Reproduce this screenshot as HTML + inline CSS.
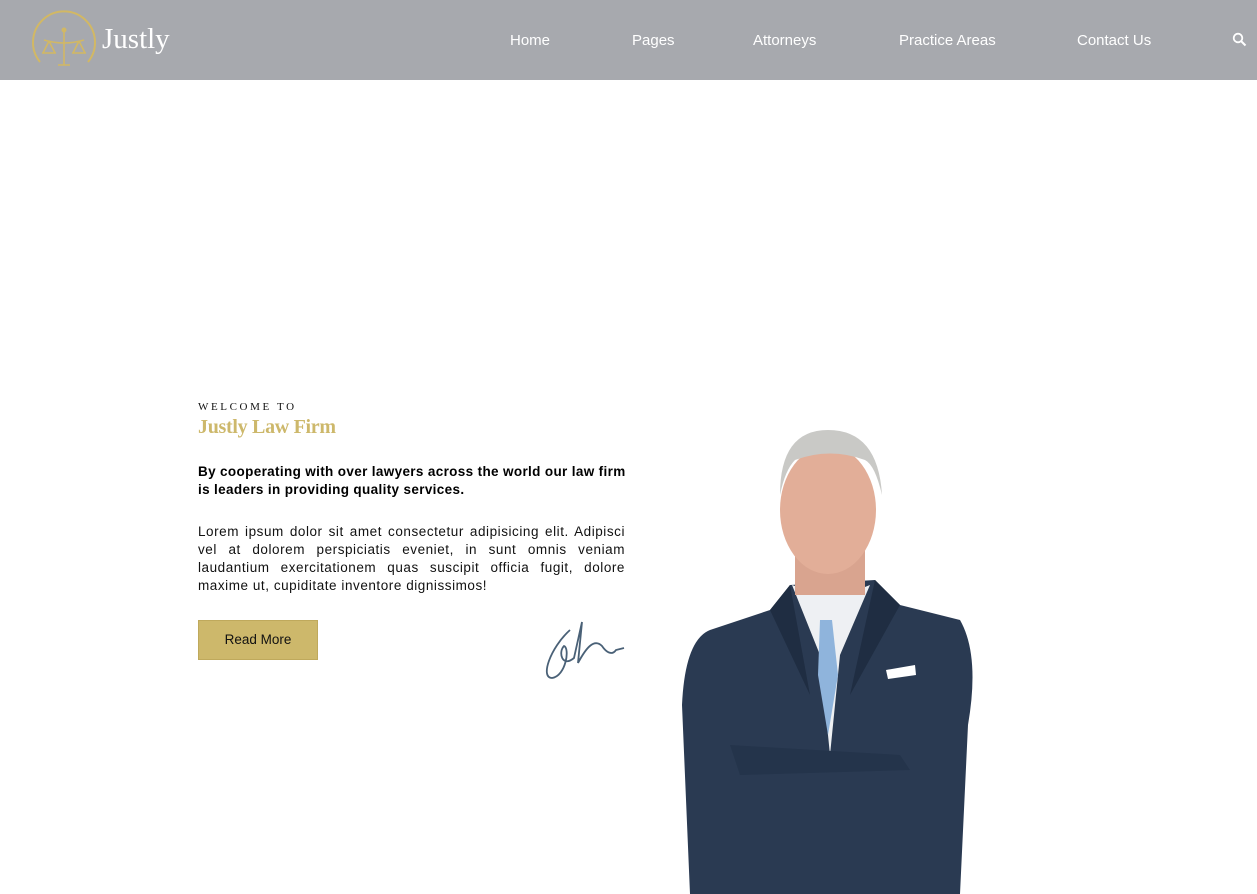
<!DOCTYPE html>
<html><head><meta charset="utf-8"><style>
*{margin:0;padding:0;box-sizing:border-box}
body{width:1257px;height:894px;overflow:hidden;background:#fff;font-family:"Liberation Sans",sans-serif;position:relative}
.hdr{position:absolute;left:0;top:0;width:1257px;height:80px;background:#a7a9ae}
.nav a{position:absolute;top:32px;color:#fff;font-size:15px;text-decoration:none}
.logo{position:absolute;left:102px;top:23px;font-family:"Liberation Serif",serif;color:#fff;font-size:29px}
.w{position:absolute;left:198px;top:401px;font-family:"Liberation Serif",serif;font-size:11px;letter-spacing:2.6px;color:#111}
.t{position:absolute;left:198px;top:416px;font-family:"Liberation Serif",serif;font-weight:bold;font-size:20px;color:#cdb86b;letter-spacing:-0.3px}
.b{position:absolute;left:198px;top:463px;width:430px;font-weight:bold;font-size:13.5px;line-height:18px;color:#000;letter-spacing:0.35px}
.p{position:absolute;left:198px;top:523px;width:427px;font-size:13.5px;line-height:18px;color:#111;text-align:justify;letter-spacing:0.55px}
.btn{position:absolute;left:198px;top:620px;width:120px;height:40px;background:#cdb86b;border:1px solid #bfa95c;color:#111;font-size:13.5px;text-align:center;line-height:38px}
</style></head><body>
<div class="hdr">
<svg style="position:absolute;left:28px;top:8px" width="72" height="64" viewBox="0 0 72 64">
<path d="M12 54 A31 31 0 1 1 60 54" fill="none" stroke="#d2b864" stroke-width="2"/>
<g stroke="#d2b864" stroke-width="1.6" fill="none">
<line x1="36" y1="24" x2="36" y2="57"/><path d="M16 32 Q36 38 56 32"/>
<line x1="21" y1="33" x2="15" y2="45"/><line x1="21" y1="33" x2="27" y2="45"/>
<line x1="51" y1="33" x2="45" y2="45"/><line x1="51" y1="33" x2="57" y2="45"/>
<path d="M14 45 h14 M44 45 h14 M30 57 h12"/></g>
<circle cx="36" cy="22" r="2.5" fill="#d2b864"/></svg>
<div class="logo">Justly</div>
<div class="nav"><a style="left:510px">Home</a><a style="left:632px">Pages</a><a style="left:753px">Attorneys</a><a style="left:899px">Practice Areas</a><a style="left:1077px">Contact Us</a></div>
<svg style="position:absolute;left:1232px;top:32px" width="16" height="16" viewBox="0 0 16 16"><circle cx="6" cy="6" r="4.3" fill="none" stroke="#fff" stroke-width="1.8"/><line x1="9" y1="9" x2="13.5" y2="13.5" stroke="#fff" stroke-width="2"/></svg>
</div>
<div class="w">WELCOME TO</div>
<div class="t">Justly Law Firm</div>
<div class="b">By cooperating with over lawyers across the world our law firm is leaders in providing quality services.</div>
<div class="p">Lorem ipsum dolor sit amet consectetur adipisicing elit. Adipisci vel at dolorem perspiciatis eveniet, in sunt omnis veniam laudantium exercitationem quas suscipit officia fugit, dolore maxime ut, cupiditate inventore dignissimos!</div>
<div class="btn">Read More</div>
<svg style="position:absolute;left:540px;top:618px" width="90" height="66" viewBox="0 0 90 66"><path d="M30 12 C10 30 0 60 12 60 C26 58 30 30 24 28 C18 34 22 50 34 40 L42 4 L38 45 C46 30 54 20 62 28 C66 34 72 38 76 32 L84 30" fill="none" stroke="#4a6177" stroke-width="1.8"/></svg>
<svg style="position:absolute;left:670px;top:425px" width="330" height="469" viewBox="0 0 330 469">
<path d="M120 160 L100 185 L40 205 Q15 215 12 280 L20 469 L290 469 L298 300 Q310 230 290 195 L230 180 L205 155 Z" fill="#2a3a52"/>
<path d="M122 160 L150 230 L160 330 L170 230 L200 160 Q165 175 122 160 Z" fill="#eef0f3"/>
<path d="M150 195 L162 195 L168 250 L158 310 L148 250 Z" fill="#8fb4dc"/>
<path d="M120 160 L140 270 L100 185 Z M205 155 L180 270 L230 180 Z" fill="#1f2d42"/>
<path d="M60 320 L230 330 L240 345 L70 350 Z" fill="#24344b"/>
<path d="M216 245 L245 240 L246 250 L218 254 Z" fill="#fff"/>
<rect x="125" y="110" width="70" height="60" fill="#d9a48f"/>
<ellipse cx="158" cy="85" rx="48" ry="64" fill="#e2ae98"/>
<path d="M110 70 Q110 5 158 5 Q208 5 212 70 Q205 40 195 35 Q160 22 125 35 Q115 45 110 70 Z" fill="#c9c9c6"/>
</svg>
</body></html>
